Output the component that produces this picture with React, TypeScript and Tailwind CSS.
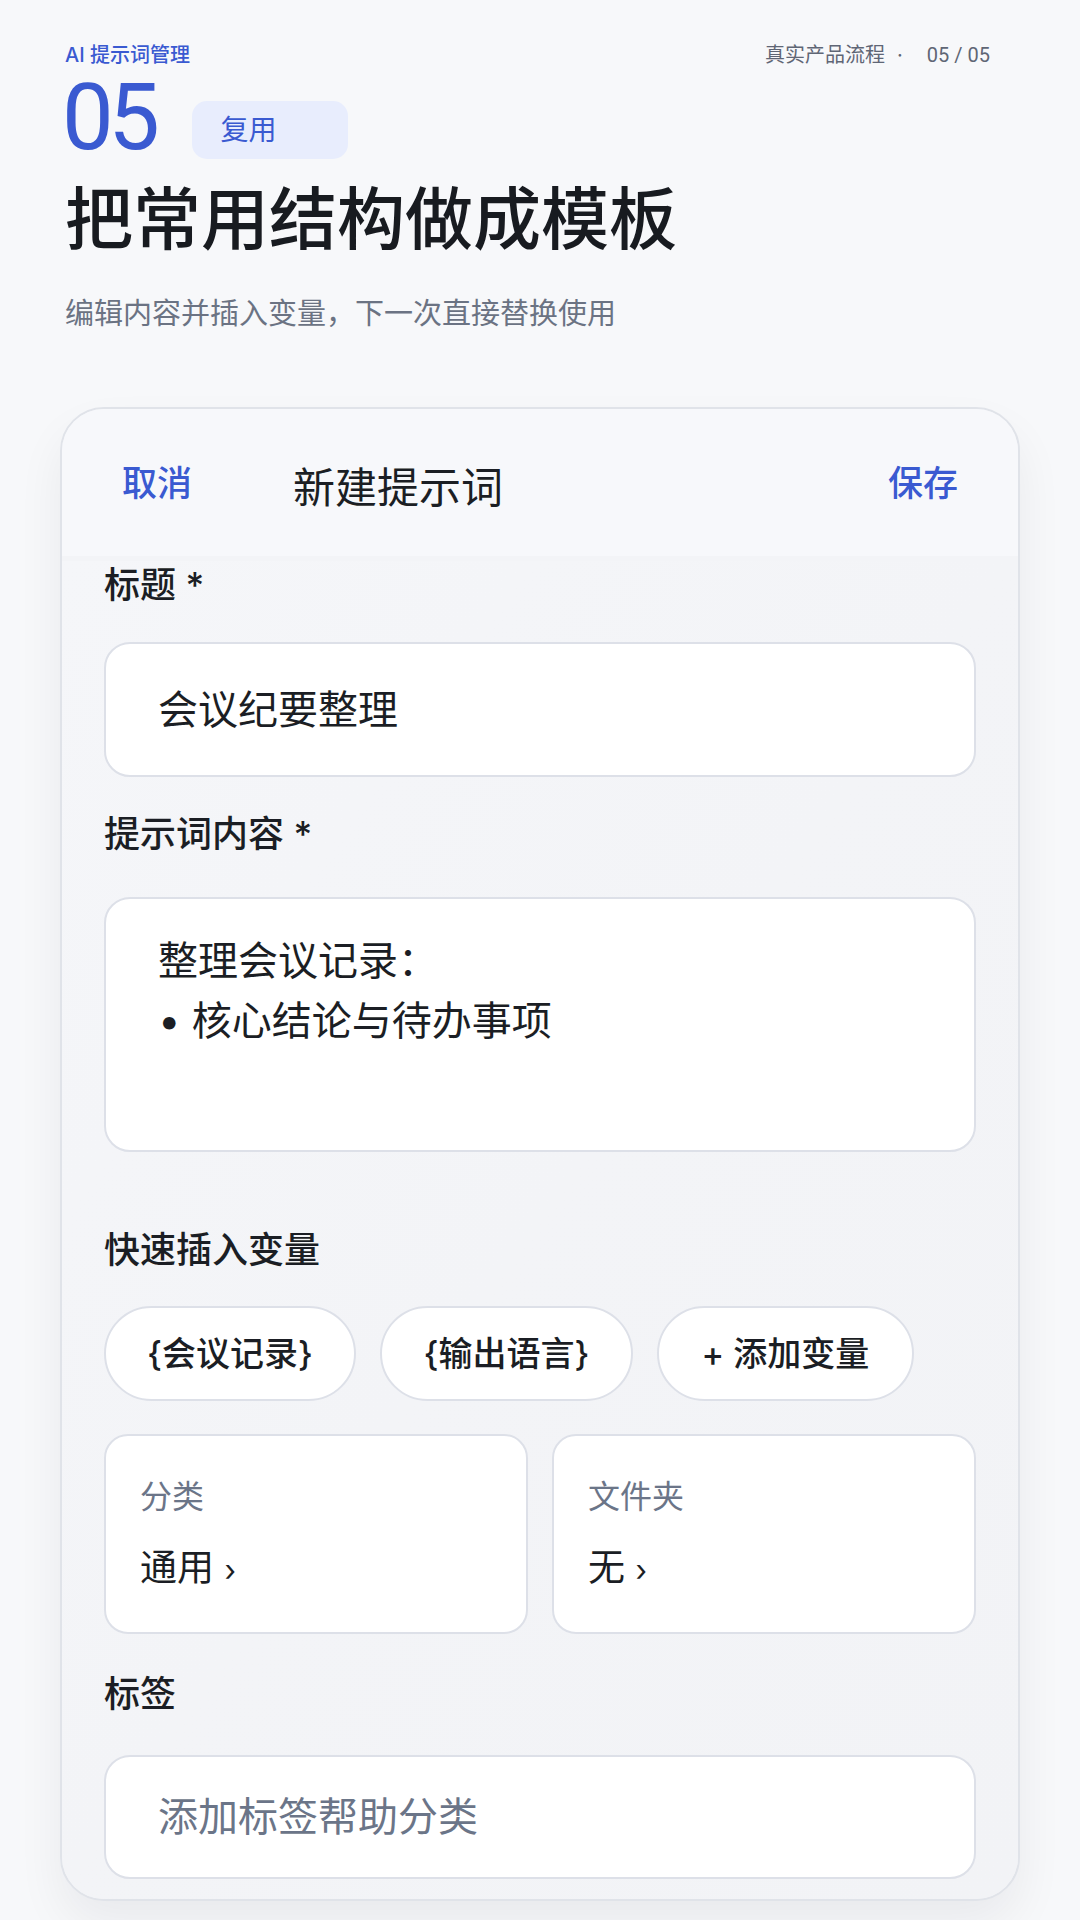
const blue = 'text-[#3a5ad1]';

function Label({ children, className = '' }: { children: React.ReactNode; className?: string }) {
  return <div className={`text-[36px] leading-[48px] font-medium text-[#1b1e24] ${className}`}>{children}</div>;
}

function Chip({ text, width }: { text: string; width: string }) {
  return (
    <div
      className={`${width} h-[95px] rounded-full border-2 border-[#dde0e8] bg-white flex items-center justify-center text-[34px] font-medium text-[#1b1e24]`}
    >
      {text}
    </div>
  );
}

function PickCard({ label, value }: { label: string; value: string }) {
  return (
    <div className="h-[200px] rounded-[24px] border-2 border-[#dde0e8] bg-white pl-[34px] pt-[39px]">
      <div className="text-[32px] leading-[44px] text-[#6b7588]">{label}</div>
      <div className="mt-[23px] text-[37px] leading-[52px] text-[#1b1e24]">
        {value} <span className="text-[30px]">›</span>
      </div>
    </div>
  );
}

export default function App() {
  return (
    <div className="w-[1080px] h-[1920px] overflow-hidden bg-[#f7f8fa] px-[65px] pt-[43px] font-['Inter','Noto_Sans_CJK_SC',sans-serif]">
      {/* top bar */}
      <div className="flex items-center justify-between h-[24px]">
        <span className={`text-[20px] leading-[24px] font-medium ${blue}`}>AI 提示词管理</span>
        <span className="mr-[25px] text-[20px] leading-[24px] text-[#5f6675]">
          真实产品流程<span className="ml-[12px]">·</span>
          <span className="ml-[24px] font-['Roboto','Noto_Sans_CJK_SC',sans-serif]">05 / 05</span>
        </span>
      </div>

      {/* step number + badge */}
      <div className="mt-[11px] flex items-start">
        <span className={`-ml-[3px] font-['Roboto',sans-serif] text-[92px] leading-[80px] tracking-[-0.06em] ${blue}`}>05</span>
        <span
          className={`ml-[38px] mt-[23px] w-[156px] h-[58px] rounded-[15px] bg-[#e8edfd] flex items-center pl-[28px] text-[28px] ${blue}`}
        >
          复用
        </span>
      </div>

      <h1 className="mt-[19px] text-[68px] leading-[82px] font-medium text-[#181b20]">把常用结构做成模板</h1>
      <p className="mt-[34px] text-[29px] leading-[40px] text-[#6b7383]">编辑内容并插入变量，下一次直接替换使用</p>

      {/* editor card */}
      <div className="mt-[73px] -mx-[5px] rounded-[44px] border-2 border-[#e0e3e9] bg-[#f3f4f7] overflow-hidden shadow-[0_24px_48px_rgba(15,23,42,0.06)]">
        <div className="h-[147px] bg-[#f7f8fb] flex items-center px-[60px]">
          <span className={`text-[35px] leading-[48px] font-medium ${blue}`}>取消</span>
          <span className="ml-[101px] mt-[10px] text-[42px] leading-[56px] text-[#1b1e24]">新建提示词</span>
          <span className={`ml-auto text-[35px] leading-[48px] font-medium ${blue}`}>保存</span>
        </div>

        <div className="px-[42px] pb-[20px] bg-gradient-to-br from-[#f5f6f9] via-[#f3f4f7] to-[#f2f3f6]">
          <Label className="mt-[5px]">标题 *</Label>
          <div className="mt-[33px] h-[135px] rounded-[26px] border-2 border-[#dde0e8] bg-white flex items-center pl-[52px] text-[40px] text-[#1b1e24]">
            会议纪要整理
          </div>

          <Label className="mt-[33px]">提示词内容 *</Label>
          <div className="mt-[39px] h-[255px] rounded-[26px] border-2 border-[#dde0e8] bg-white pl-[52px] pt-[32px] text-[40px] leading-[60px] text-[#1b1e24]">
            <div>整理会议记录：</div>
            <div>• 核心结论与待办事项</div>
          </div>

          <Label className="mt-[74px]">快速插入变量</Label>
          <div className="mt-[32px] flex gap-[24px]">
            <Chip text="{会议记录}" width="w-[252px]" />
            <Chip text="{输出语言}" width="w-[253px]" />
            <Chip text="+ 添加变量" width="w-[257px]" />
          </div>

          <div className="mt-[33px] grid grid-cols-2 gap-[24px]">
            <PickCard label="分类" value="通用" />
            <PickCard label="文件夹" value="无" />
          </div>

          <Label className="mt-[36px]">标签</Label>
          <div className="mt-[37px] h-[124px] rounded-[26px] border-2 border-[#dde0e8] bg-white flex items-center pl-[52px] text-[40px] text-[#6b7588]">
            添加标签帮助分类
          </div>
        </div>
      </div>
    </div>
  );
}
